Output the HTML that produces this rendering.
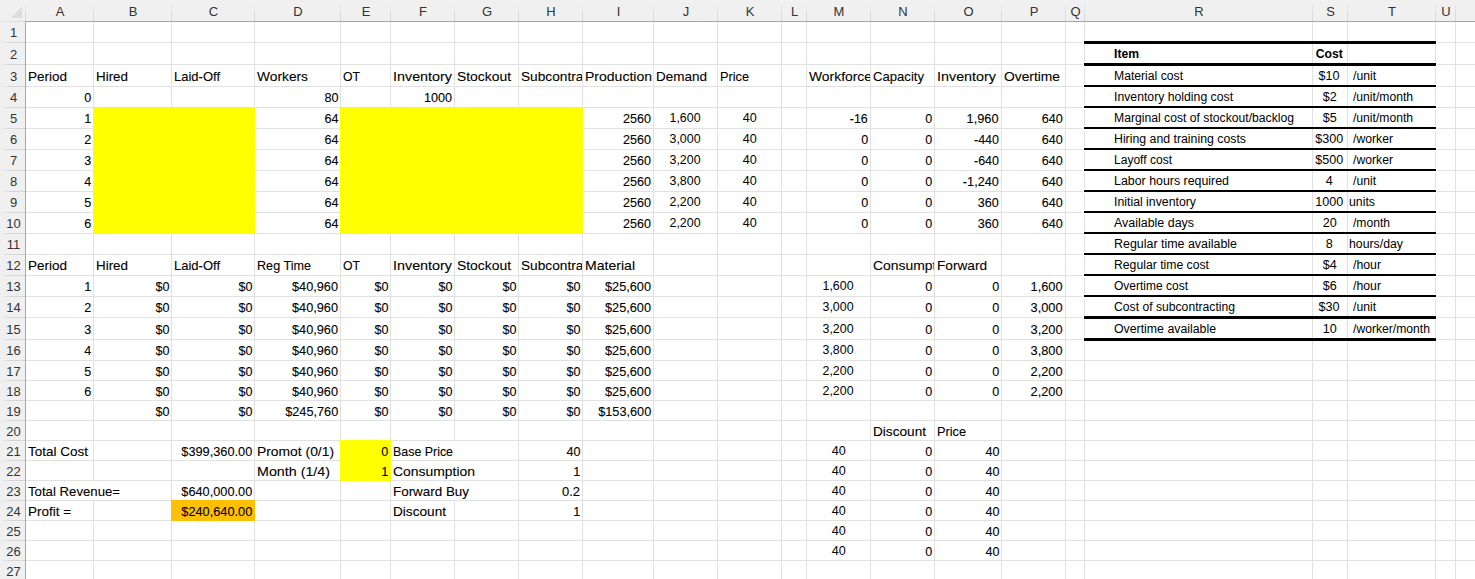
<!DOCTYPE html>
<html><head><meta charset="utf-8"><style>
html,body{margin:0;padding:0;background:#fff;}
body{width:1475px;height:579px;position:relative;overflow:hidden;font-family:"Liberation Sans",sans-serif;}
body div{position:absolute;}
.h{font-size:13px;color:#333333;}
.c{font-size:13.0px;line-height:15px;white-space:nowrap;color:#000;-webkit-text-stroke:0.1px #000;}
.c span,.ar span{display:inline-block;}
.ar{font-size:12px;line-height:14px;white-space:nowrap;color:#000;}
.a{font-size:12px;line-height:14px;white-space:nowrap;color:#000;}
</style></head><body>
<div style="left:93px;top:22px;width:1px;height:557px;background:#e1e1e1;"></div>
<div style="left:171px;top:22px;width:1px;height:557px;background:#e1e1e1;"></div>
<div style="left:254px;top:22px;width:1px;height:557px;background:#e1e1e1;"></div>
<div style="left:340px;top:22px;width:1px;height:557px;background:#e1e1e1;"></div>
<div style="left:390px;top:22px;width:1px;height:557px;background:#e1e1e1;"></div>
<div style="left:454px;top:22px;width:1px;height:557px;background:#e1e1e1;"></div>
<div style="left:518px;top:22px;width:1px;height:557px;background:#e1e1e1;"></div>
<div style="left:582px;top:22px;width:1px;height:557px;background:#e1e1e1;"></div>
<div style="left:653px;top:22px;width:1px;height:557px;background:#e1e1e1;"></div>
<div style="left:717px;top:22px;width:1px;height:557px;background:#e1e1e1;"></div>
<div style="left:781px;top:22px;width:1px;height:557px;background:#e1e1e1;"></div>
<div style="left:806px;top:22px;width:1px;height:557px;background:#e1e1e1;"></div>
<div style="left:870px;top:22px;width:1px;height:557px;background:#e1e1e1;"></div>
<div style="left:934px;top:22px;width:1px;height:557px;background:#e1e1e1;"></div>
<div style="left:1001px;top:22px;width:1px;height:557px;background:#e1e1e1;"></div>
<div style="left:1065px;top:22px;width:1px;height:557px;background:#e1e1e1;"></div>
<div style="left:1084px;top:22px;width:1px;height:557px;background:#e1e1e1;"></div>
<div style="left:1312px;top:22px;width:1px;height:557px;background:#e1e1e1;"></div>
<div style="left:1347px;top:22px;width:1px;height:557px;background:#e1e1e1;"></div>
<div style="left:1435px;top:22px;width:1px;height:557px;background:#e1e1e1;"></div>
<div style="left:1455px;top:22px;width:1px;height:557px;background:#e1e1e1;"></div>
<div style="left:26px;top:42px;width:1449px;height:1px;background:#e1e1e1;"></div>
<div style="left:26px;top:64px;width:1449px;height:1px;background:#e1e1e1;"></div>
<div style="left:26px;top:86px;width:1449px;height:1px;background:#e1e1e1;"></div>
<div style="left:26px;top:107px;width:1449px;height:1px;background:#e1e1e1;"></div>
<div style="left:26px;top:128px;width:1449px;height:1px;background:#e1e1e1;"></div>
<div style="left:26px;top:149px;width:1449px;height:1px;background:#e1e1e1;"></div>
<div style="left:26px;top:170px;width:1449px;height:1px;background:#e1e1e1;"></div>
<div style="left:26px;top:191px;width:1449px;height:1px;background:#e1e1e1;"></div>
<div style="left:26px;top:212px;width:1449px;height:1px;background:#e1e1e1;"></div>
<div style="left:26px;top:233px;width:1449px;height:1px;background:#e1e1e1;"></div>
<div style="left:26px;top:254px;width:1449px;height:1px;background:#e1e1e1;"></div>
<div style="left:26px;top:275px;width:1449px;height:1px;background:#e1e1e1;"></div>
<div style="left:26px;top:296px;width:1449px;height:1px;background:#e1e1e1;"></div>
<div style="left:26px;top:317px;width:1449px;height:1px;background:#e1e1e1;"></div>
<div style="left:26px;top:339px;width:1449px;height:1px;background:#e1e1e1;"></div>
<div style="left:26px;top:360px;width:1449px;height:1px;background:#e1e1e1;"></div>
<div style="left:26px;top:380px;width:1449px;height:1px;background:#e1e1e1;"></div>
<div style="left:26px;top:400px;width:1449px;height:1px;background:#e1e1e1;"></div>
<div style="left:26px;top:420px;width:1449px;height:1px;background:#e1e1e1;"></div>
<div style="left:26px;top:440px;width:1449px;height:1px;background:#e1e1e1;"></div>
<div style="left:26px;top:460px;width:1449px;height:1px;background:#e1e1e1;"></div>
<div style="left:26px;top:480px;width:1449px;height:1px;background:#e1e1e1;"></div>
<div style="left:26px;top:500px;width:1449px;height:1px;background:#e1e1e1;"></div>
<div style="left:26px;top:520px;width:1449px;height:1px;background:#e1e1e1;"></div>
<div style="left:26px;top:540px;width:1449px;height:1px;background:#e1e1e1;"></div>
<div style="left:26px;top:560px;width:1449px;height:1px;background:#e1e1e1;"></div>
<div style="left:0px;top:0px;width:1475px;height:21px;background:#f0f0f0;"></div>
<div style="left:0px;top:22px;width:25px;height:557px;background:#f0f0f0;"></div>
<div style="left:25px;top:21px;width:1450px;height:1px;background:#a6a6a6;"></div>
<div style="left:25px;top:21px;width:1px;height:558px;background:#a6a6a6;"></div>
<div style="left:0px;top:21px;width:25px;height:1px;background:#dadada;background:linear-gradient(90deg,#f0f0f0,#d8d8d8 60%,#d8d8d8)"></div>
<div style="left:25px;top:2px;width:1px;height:19px;background:#dadada;background:linear-gradient(180deg,#f0f0f0,#dcdcdc 60%,#d8d8d8)"></div>
<div style="left:93px;top:2px;width:1px;height:19px;background:#dadada;background:linear-gradient(180deg,#efefef,#dcdcdc 60%,#d8d8d8)"></div>
<div style="left:171px;top:2px;width:1px;height:19px;background:#dadada;background:linear-gradient(180deg,#efefef,#dcdcdc 60%,#d8d8d8)"></div>
<div style="left:254px;top:2px;width:1px;height:19px;background:#dadada;background:linear-gradient(180deg,#efefef,#dcdcdc 60%,#d8d8d8)"></div>
<div style="left:340px;top:2px;width:1px;height:19px;background:#dadada;background:linear-gradient(180deg,#efefef,#dcdcdc 60%,#d8d8d8)"></div>
<div style="left:390px;top:2px;width:1px;height:19px;background:#dadada;background:linear-gradient(180deg,#efefef,#dcdcdc 60%,#d8d8d8)"></div>
<div style="left:454px;top:2px;width:1px;height:19px;background:#dadada;background:linear-gradient(180deg,#efefef,#dcdcdc 60%,#d8d8d8)"></div>
<div style="left:518px;top:2px;width:1px;height:19px;background:#dadada;background:linear-gradient(180deg,#efefef,#dcdcdc 60%,#d8d8d8)"></div>
<div style="left:582px;top:2px;width:1px;height:19px;background:#dadada;background:linear-gradient(180deg,#efefef,#dcdcdc 60%,#d8d8d8)"></div>
<div style="left:653px;top:2px;width:1px;height:19px;background:#dadada;background:linear-gradient(180deg,#efefef,#dcdcdc 60%,#d8d8d8)"></div>
<div style="left:717px;top:2px;width:1px;height:19px;background:#dadada;background:linear-gradient(180deg,#efefef,#dcdcdc 60%,#d8d8d8)"></div>
<div style="left:781px;top:2px;width:1px;height:19px;background:#dadada;background:linear-gradient(180deg,#efefef,#dcdcdc 60%,#d8d8d8)"></div>
<div style="left:806px;top:2px;width:1px;height:19px;background:#dadada;background:linear-gradient(180deg,#efefef,#dcdcdc 60%,#d8d8d8)"></div>
<div style="left:870px;top:2px;width:1px;height:19px;background:#dadada;background:linear-gradient(180deg,#efefef,#dcdcdc 60%,#d8d8d8)"></div>
<div style="left:934px;top:2px;width:1px;height:19px;background:#dadada;background:linear-gradient(180deg,#efefef,#dcdcdc 60%,#d8d8d8)"></div>
<div style="left:1001px;top:2px;width:1px;height:19px;background:#dadada;background:linear-gradient(180deg,#efefef,#dcdcdc 60%,#d8d8d8)"></div>
<div style="left:1065px;top:2px;width:1px;height:19px;background:#dadada;background:linear-gradient(180deg,#efefef,#dcdcdc 60%,#d8d8d8)"></div>
<div style="left:1084px;top:2px;width:1px;height:19px;background:#dadada;background:linear-gradient(180deg,#efefef,#dcdcdc 60%,#d8d8d8)"></div>
<div style="left:1312px;top:2px;width:1px;height:19px;background:#dadada;background:linear-gradient(180deg,#efefef,#dcdcdc 60%,#d8d8d8)"></div>
<div style="left:1347px;top:2px;width:1px;height:19px;background:#dadada;background:linear-gradient(180deg,#efefef,#dcdcdc 60%,#d8d8d8)"></div>
<div style="left:1435px;top:2px;width:1px;height:19px;background:#dadada;background:linear-gradient(180deg,#efefef,#dcdcdc 60%,#d8d8d8)"></div>
<div style="left:1455px;top:2px;width:1px;height:19px;background:#dadada;background:linear-gradient(180deg,#efefef,#dcdcdc 60%,#d8d8d8)"></div>
<div style="left:0px;top:42px;width:25px;height:1px;background:#dadada;background:linear-gradient(90deg,#f0f0f0,#d6d6d6 40%)"></div>
<div style="left:0px;top:64px;width:25px;height:1px;background:#dadada;background:linear-gradient(90deg,#f0f0f0,#d6d6d6 40%)"></div>
<div style="left:0px;top:86px;width:25px;height:1px;background:#dadada;background:linear-gradient(90deg,#f0f0f0,#d6d6d6 40%)"></div>
<div style="left:0px;top:107px;width:25px;height:1px;background:#dadada;background:linear-gradient(90deg,#f0f0f0,#d6d6d6 40%)"></div>
<div style="left:0px;top:128px;width:25px;height:1px;background:#dadada;background:linear-gradient(90deg,#f0f0f0,#d6d6d6 40%)"></div>
<div style="left:0px;top:149px;width:25px;height:1px;background:#dadada;background:linear-gradient(90deg,#f0f0f0,#d6d6d6 40%)"></div>
<div style="left:0px;top:170px;width:25px;height:1px;background:#dadada;background:linear-gradient(90deg,#f0f0f0,#d6d6d6 40%)"></div>
<div style="left:0px;top:191px;width:25px;height:1px;background:#dadada;background:linear-gradient(90deg,#f0f0f0,#d6d6d6 40%)"></div>
<div style="left:0px;top:212px;width:25px;height:1px;background:#dadada;background:linear-gradient(90deg,#f0f0f0,#d6d6d6 40%)"></div>
<div style="left:0px;top:233px;width:25px;height:1px;background:#dadada;background:linear-gradient(90deg,#f0f0f0,#d6d6d6 40%)"></div>
<div style="left:0px;top:254px;width:25px;height:1px;background:#dadada;background:linear-gradient(90deg,#f0f0f0,#d6d6d6 40%)"></div>
<div style="left:0px;top:275px;width:25px;height:1px;background:#dadada;background:linear-gradient(90deg,#f0f0f0,#d6d6d6 40%)"></div>
<div style="left:0px;top:296px;width:25px;height:1px;background:#dadada;background:linear-gradient(90deg,#f0f0f0,#d6d6d6 40%)"></div>
<div style="left:0px;top:317px;width:25px;height:1px;background:#dadada;background:linear-gradient(90deg,#f0f0f0,#d6d6d6 40%)"></div>
<div style="left:0px;top:339px;width:25px;height:1px;background:#dadada;background:linear-gradient(90deg,#f0f0f0,#d6d6d6 40%)"></div>
<div style="left:0px;top:360px;width:25px;height:1px;background:#dadada;background:linear-gradient(90deg,#f0f0f0,#d6d6d6 40%)"></div>
<div style="left:0px;top:380px;width:25px;height:1px;background:#dadada;background:linear-gradient(90deg,#f0f0f0,#d6d6d6 40%)"></div>
<div style="left:0px;top:400px;width:25px;height:1px;background:#dadada;background:linear-gradient(90deg,#f0f0f0,#d6d6d6 40%)"></div>
<div style="left:0px;top:420px;width:25px;height:1px;background:#dadada;background:linear-gradient(90deg,#f0f0f0,#d6d6d6 40%)"></div>
<div style="left:0px;top:440px;width:25px;height:1px;background:#dadada;background:linear-gradient(90deg,#f0f0f0,#d6d6d6 40%)"></div>
<div style="left:0px;top:460px;width:25px;height:1px;background:#dadada;background:linear-gradient(90deg,#f0f0f0,#d6d6d6 40%)"></div>
<div style="left:0px;top:480px;width:25px;height:1px;background:#dadada;background:linear-gradient(90deg,#f0f0f0,#d6d6d6 40%)"></div>
<div style="left:0px;top:500px;width:25px;height:1px;background:#dadada;background:linear-gradient(90deg,#f0f0f0,#d6d6d6 40%)"></div>
<div style="left:0px;top:520px;width:25px;height:1px;background:#dadada;background:linear-gradient(90deg,#f0f0f0,#d6d6d6 40%)"></div>
<div style="left:0px;top:540px;width:25px;height:1px;background:#dadada;background:linear-gradient(90deg,#f0f0f0,#d6d6d6 40%)"></div>
<div style="left:0px;top:560px;width:25px;height:1px;background:#dadada;background:linear-gradient(90deg,#f0f0f0,#d6d6d6 40%)"></div>
<svg style="position:absolute;left:0;top:0" width="25" height="21"><polygon points="22,6.5 22,18 11,18" fill="#dedede"/></svg>
<div style="left:93px;top:107px;width:162px;height:127px;background:#ffff00;"></div>
<div style="left:340px;top:107px;width:243px;height:127px;background:#ffff00;"></div>
<div style="left:340px;top:440px;width:51px;height:41px;background:#ffff00;"></div>
<div style="left:171px;top:500px;width:84px;height:21px;background:#ffc000;"></div>
<div style="left:93px;top:481px;width:1px;height:19px;background:#ffffff;"></div>
<div style="left:454px;top:441px;width:1px;height:19px;background:#ffffff;"></div>
<div style="left:454px;top:461px;width:1px;height:19px;background:#ffffff;"></div>
<div style="left:454px;top:481px;width:1px;height:19px;background:#ffffff;"></div>
<div style="left:1083px;top:40px;width:1px;height:5px;background:#fff;"></div>
<div style="left:1436px;top:40px;width:1px;height:5px;background:#fff;"></div>
<div style="left:1084px;top:40px;width:1px;height:5px;background:#fff;"></div>
<div style="left:1435px;top:40px;width:1px;height:5px;background:#fff;"></div>
<div style="left:1084px;top:41px;width:352px;height:3px;background:#000;"></div>
<div style="left:1083px;top:62px;width:1px;height:5px;background:#fff;"></div>
<div style="left:1436px;top:62px;width:1px;height:5px;background:#fff;"></div>
<div style="left:1084px;top:62px;width:1px;height:5px;background:#fff;"></div>
<div style="left:1435px;top:62px;width:1px;height:5px;background:#fff;"></div>
<div style="left:1084px;top:63px;width:352px;height:3px;background:#000;"></div>
<div style="left:1083px;top:84px;width:1px;height:5px;background:#fff;"></div>
<div style="left:1436px;top:84px;width:1px;height:5px;background:#fff;"></div>
<div style="left:1084px;top:84px;width:1px;height:5px;background:#fff;"></div>
<div style="left:1435px;top:84px;width:1px;height:5px;background:#fff;"></div>
<div style="left:1084px;top:85px;width:352px;height:2px;background:#000;"></div>
<div style="left:1083px;top:105px;width:1px;height:5px;background:#fff;"></div>
<div style="left:1436px;top:105px;width:1px;height:5px;background:#fff;"></div>
<div style="left:1084px;top:105px;width:1px;height:5px;background:#fff;"></div>
<div style="left:1435px;top:105px;width:1px;height:5px;background:#fff;"></div>
<div style="left:1084px;top:106px;width:352px;height:2px;background:#000;"></div>
<div style="left:1083px;top:126px;width:1px;height:5px;background:#fff;"></div>
<div style="left:1436px;top:126px;width:1px;height:5px;background:#fff;"></div>
<div style="left:1084px;top:126px;width:1px;height:5px;background:#fff;"></div>
<div style="left:1435px;top:126px;width:1px;height:5px;background:#fff;"></div>
<div style="left:1084px;top:127px;width:352px;height:2px;background:#000;"></div>
<div style="left:1083px;top:147px;width:1px;height:5px;background:#fff;"></div>
<div style="left:1436px;top:147px;width:1px;height:5px;background:#fff;"></div>
<div style="left:1084px;top:147px;width:1px;height:5px;background:#fff;"></div>
<div style="left:1435px;top:147px;width:1px;height:5px;background:#fff;"></div>
<div style="left:1084px;top:148px;width:352px;height:2px;background:#000;"></div>
<div style="left:1083px;top:168px;width:1px;height:5px;background:#fff;"></div>
<div style="left:1436px;top:168px;width:1px;height:5px;background:#fff;"></div>
<div style="left:1084px;top:168px;width:1px;height:5px;background:#fff;"></div>
<div style="left:1435px;top:168px;width:1px;height:5px;background:#fff;"></div>
<div style="left:1084px;top:169px;width:352px;height:2px;background:#000;"></div>
<div style="left:1083px;top:189px;width:1px;height:5px;background:#fff;"></div>
<div style="left:1436px;top:189px;width:1px;height:5px;background:#fff;"></div>
<div style="left:1084px;top:189px;width:1px;height:5px;background:#fff;"></div>
<div style="left:1435px;top:189px;width:1px;height:5px;background:#fff;"></div>
<div style="left:1084px;top:190px;width:352px;height:2px;background:#000;"></div>
<div style="left:1083px;top:210px;width:1px;height:5px;background:#fff;"></div>
<div style="left:1436px;top:210px;width:1px;height:5px;background:#fff;"></div>
<div style="left:1084px;top:210px;width:1px;height:5px;background:#fff;"></div>
<div style="left:1435px;top:210px;width:1px;height:5px;background:#fff;"></div>
<div style="left:1084px;top:211px;width:352px;height:2px;background:#000;"></div>
<div style="left:1083px;top:231px;width:1px;height:5px;background:#fff;"></div>
<div style="left:1436px;top:231px;width:1px;height:5px;background:#fff;"></div>
<div style="left:1084px;top:231px;width:1px;height:5px;background:#fff;"></div>
<div style="left:1435px;top:231px;width:1px;height:5px;background:#fff;"></div>
<div style="left:1084px;top:232px;width:352px;height:2px;background:#000;"></div>
<div style="left:1083px;top:252px;width:1px;height:5px;background:#fff;"></div>
<div style="left:1436px;top:252px;width:1px;height:5px;background:#fff;"></div>
<div style="left:1084px;top:252px;width:1px;height:5px;background:#fff;"></div>
<div style="left:1435px;top:252px;width:1px;height:5px;background:#fff;"></div>
<div style="left:1084px;top:253px;width:352px;height:2px;background:#000;"></div>
<div style="left:1083px;top:273px;width:1px;height:5px;background:#fff;"></div>
<div style="left:1436px;top:273px;width:1px;height:5px;background:#fff;"></div>
<div style="left:1084px;top:273px;width:1px;height:5px;background:#fff;"></div>
<div style="left:1435px;top:273px;width:1px;height:5px;background:#fff;"></div>
<div style="left:1084px;top:274px;width:352px;height:2px;background:#000;"></div>
<div style="left:1083px;top:294px;width:1px;height:5px;background:#fff;"></div>
<div style="left:1436px;top:294px;width:1px;height:5px;background:#fff;"></div>
<div style="left:1084px;top:294px;width:1px;height:5px;background:#fff;"></div>
<div style="left:1435px;top:294px;width:1px;height:5px;background:#fff;"></div>
<div style="left:1084px;top:295px;width:352px;height:2px;background:#000;"></div>
<div style="left:1083px;top:315px;width:1px;height:5px;background:#fff;"></div>
<div style="left:1436px;top:315px;width:1px;height:5px;background:#fff;"></div>
<div style="left:1084px;top:315px;width:1px;height:5px;background:#fff;"></div>
<div style="left:1435px;top:315px;width:1px;height:5px;background:#fff;"></div>
<div style="left:1084px;top:316px;width:352px;height:3px;background:#000;"></div>
<div style="left:1083px;top:337px;width:1px;height:5px;background:#fff;"></div>
<div style="left:1436px;top:337px;width:1px;height:5px;background:#fff;"></div>
<div style="left:1084px;top:337px;width:1px;height:5px;background:#fff;"></div>
<div style="left:1435px;top:337px;width:1px;height:5px;background:#fff;"></div>
<div style="left:1084px;top:338px;width:352px;height:3px;background:#000;"></div>
<div class="h" style="left:26px;top:1px;width:68px;height:21px;line-height:21px;text-align:center">A</div>
<div class="h" style="left:94px;top:1px;width:78px;height:21px;line-height:21px;text-align:center">B</div>
<div class="h" style="left:172px;top:1px;width:83px;height:21px;line-height:21px;text-align:center">C</div>
<div class="h" style="left:255px;top:1px;width:86px;height:21px;line-height:21px;text-align:center">D</div>
<div class="h" style="left:341px;top:1px;width:50px;height:21px;line-height:21px;text-align:center">E</div>
<div class="h" style="left:391px;top:1px;width:64px;height:21px;line-height:21px;text-align:center">F</div>
<div class="h" style="left:455px;top:1px;width:64px;height:21px;line-height:21px;text-align:center">G</div>
<div class="h" style="left:519px;top:1px;width:64px;height:21px;line-height:21px;text-align:center">H</div>
<div class="h" style="left:583px;top:1px;width:71px;height:21px;line-height:21px;text-align:center">I</div>
<div class="h" style="left:654px;top:1px;width:64px;height:21px;line-height:21px;text-align:center">J</div>
<div class="h" style="left:718px;top:1px;width:64px;height:21px;line-height:21px;text-align:center">K</div>
<div class="h" style="left:782px;top:1px;width:25px;height:21px;line-height:21px;text-align:center">L</div>
<div class="h" style="left:807px;top:1px;width:64px;height:21px;line-height:21px;text-align:center">M</div>
<div class="h" style="left:871px;top:1px;width:64px;height:21px;line-height:21px;text-align:center">N</div>
<div class="h" style="left:935px;top:1px;width:67px;height:21px;line-height:21px;text-align:center">O</div>
<div class="h" style="left:1002px;top:1px;width:64px;height:21px;line-height:21px;text-align:center">P</div>
<div class="h" style="left:1066px;top:1px;width:19px;height:21px;line-height:21px;text-align:center">Q</div>
<div class="h" style="left:1085px;top:1px;width:228px;height:21px;line-height:21px;text-align:center">R</div>
<div class="h" style="left:1313px;top:1px;width:35px;height:21px;line-height:21px;text-align:center">S</div>
<div class="h" style="left:1348px;top:1px;width:88px;height:21px;line-height:21px;text-align:center">T</div>
<div class="h" style="left:1436px;top:1px;width:20px;height:21px;line-height:21px;text-align:center">U</div>
<div class="h" style="left:1456px;top:1px;width:85px;height:21px;line-height:21px;text-align:center">V</div>
<div class="h" style="left:1px;top:23px;width:25px;height:20px;line-height:20px;text-align:center">1</div>
<div class="h" style="left:1px;top:45px;width:25px;height:20px;line-height:20px;text-align:center">2</div>
<div class="h" style="left:1px;top:67px;width:25px;height:20px;line-height:20px;text-align:center">3</div>
<div class="h" style="left:1px;top:88px;width:25px;height:20px;line-height:20px;text-align:center">4</div>
<div class="h" style="left:1px;top:109px;width:25px;height:20px;line-height:20px;text-align:center">5</div>
<div class="h" style="left:1px;top:130px;width:25px;height:20px;line-height:20px;text-align:center">6</div>
<div class="h" style="left:1px;top:151px;width:25px;height:20px;line-height:20px;text-align:center">7</div>
<div class="h" style="left:1px;top:172px;width:25px;height:20px;line-height:20px;text-align:center">8</div>
<div class="h" style="left:1px;top:193px;width:25px;height:20px;line-height:20px;text-align:center">9</div>
<div class="h" style="left:1px;top:214px;width:25px;height:20px;line-height:20px;text-align:center">10</div>
<div class="h" style="left:1px;top:235px;width:25px;height:20px;line-height:20px;text-align:center">11</div>
<div class="h" style="left:1px;top:256px;width:25px;height:20px;line-height:20px;text-align:center">12</div>
<div class="h" style="left:1px;top:277px;width:25px;height:20px;line-height:20px;text-align:center">13</div>
<div class="h" style="left:1px;top:298px;width:25px;height:20px;line-height:20px;text-align:center">14</div>
<div class="h" style="left:1px;top:320px;width:25px;height:20px;line-height:20px;text-align:center">15</div>
<div class="h" style="left:1px;top:341px;width:25px;height:20px;line-height:20px;text-align:center">16</div>
<div class="h" style="left:1px;top:362px;width:25px;height:20px;line-height:20px;text-align:center">17</div>
<div class="h" style="left:1px;top:382px;width:25px;height:20px;line-height:20px;text-align:center">18</div>
<div class="h" style="left:1px;top:402px;width:25px;height:20px;line-height:20px;text-align:center">19</div>
<div class="h" style="left:1px;top:422px;width:25px;height:20px;line-height:20px;text-align:center">20</div>
<div class="h" style="left:1px;top:442px;width:25px;height:20px;line-height:20px;text-align:center">21</div>
<div class="h" style="left:1px;top:462px;width:25px;height:20px;line-height:20px;text-align:center">22</div>
<div class="h" style="left:1px;top:482px;width:25px;height:20px;line-height:20px;text-align:center">23</div>
<div class="h" style="left:1px;top:502px;width:25px;height:20px;line-height:20px;text-align:center">24</div>
<div class="h" style="left:1px;top:522px;width:25px;height:20px;line-height:20px;text-align:center">25</div>
<div class="h" style="left:1px;top:542px;width:25px;height:20px;line-height:20px;text-align:center">26</div>
<div class="h" style="left:1px;top:562px;width:25px;height:20px;line-height:20px;text-align:center">27</div>
<div class="c" style="left:28px;top:68.5px"><span style="transform:scaleX(1.0379);transform-origin:0 0">Period</span></div>
<div class="c" style="left:96px;top:68.5px"><span style="transform:scaleX(1.0301);transform-origin:0 0">Hired</span></div>
<div class="c" style="left:174px;top:68.5px"><span style="transform:scaleX(0.9999);transform-origin:0 0">Laid-Off</span></div>
<div class="c" style="left:257px;top:68.5px"><span style="transform:scaleX(1.0592);transform-origin:0 0">Workers</span></div>
<div class="c" style="left:343px;top:68.5px"><span style="transform:scaleX(0.9417);transform-origin:0 0">OT</span></div>
<div class="c" style="left:393px;top:68.5px"><span style="transform:scaleX(1.1035);transform-origin:0 0">Inventory</span></div>
<div class="c" style="left:457px;top:68.5px"><span style="transform:scaleX(1.0676);transform-origin:0 0">Stockout</span></div>
<div class="c" style="left:585px;top:68.5px"><span style="transform:scaleX(1.0781);transform-origin:0 0">Production</span></div>
<div class="c" style="left:656px;top:68.5px"><span style="transform:scaleX(1.0380);transform-origin:0 0">Demand</span></div>
<div class="c" style="left:720px;top:68.5px"><span style="transform:scaleX(0.9791);transform-origin:0 0">Price</span></div>
<div class="c" style="left:873px;top:68.5px"><span style="transform:scaleX(1.0084);transform-origin:0 0">Capacity</span></div>
<div class="c" style="left:937px;top:68.5px"><span style="transform:scaleX(1.1035);transform-origin:0 0">Inventory</span></div>
<div class="c" style="left:1004px;top:68.5px"><span style="transform:scaleX(1.0621);transform-origin:0 0">Overtime</span></div>
<div style="left:519px;top:65px;width:63px;height:21px;overflow:hidden"><div class="c" style="left:2px;top:3.5px"><span style="transform:scaleX(1.0523);transform-origin:0 0">Subcontract</span></div></div>
<div style="left:807px;top:65px;width:63px;height:21px;overflow:hidden"><div class="c" style="left:2px;top:3.5px"><span style="transform:scaleX(1.0679);transform-origin:0 0">Workforce</span></div></div>
<div class="c" style="right:1384px;top:89.5px"><span style="transform:scaleX(0.9683);transform-origin:100% 0">0</span></div>
<div class="c" style="right:1137px;top:89.5px"><span style="transform:scaleX(0.9683);transform-origin:100% 0">80</span></div>
<div class="c" style="right:1023px;top:89.5px"><span style="transform:scaleX(0.9683);transform-origin:100% 0">1000</span></div>
<div class="c" style="right:1384px;top:110.5px"><span style="transform:scaleX(0.9683);transform-origin:100% 0">1</span></div>
<div class="c" style="right:1137px;top:110.5px"><span style="transform:scaleX(0.9683);transform-origin:100% 0">64</span></div>
<div class="c" style="right:824px;top:110.5px"><span style="transform:scaleX(0.9683);transform-origin:100% 0">2560</span></div>
<div class="ar" style="left:585.5px;width:200px;text-align:center;top:110.5px"><span style="transform:scaleX(1.0328);transform-origin:50% 0">1,600</span></div>
<div class="ar" style="left:649.5px;width:200px;text-align:center;top:110.5px"><span style="transform:scaleX(1.0492);transform-origin:50% 0">40</span></div>
<div class="c" style="right:607px;top:110.5px"><span style="transform:scaleX(0.9581);transform-origin:100% 0">-16</span></div>
<div class="c" style="right:543px;top:110.5px"><span style="transform:scaleX(0.9683);transform-origin:100% 0">0</span></div>
<div class="c" style="right:476px;top:110.5px"><span style="transform:scaleX(0.9838);transform-origin:100% 0">1,960</span></div>
<div class="c" style="right:412px;top:110.5px"><span style="transform:scaleX(0.9683);transform-origin:100% 0">640</span></div>
<div class="c" style="right:1384px;top:131.5px"><span style="transform:scaleX(0.9683);transform-origin:100% 0">2</span></div>
<div class="c" style="right:1137px;top:131.5px"><span style="transform:scaleX(0.9683);transform-origin:100% 0">64</span></div>
<div class="c" style="right:824px;top:131.5px"><span style="transform:scaleX(0.9683);transform-origin:100% 0">2560</span></div>
<div class="ar" style="left:585.5px;width:200px;text-align:center;top:131.5px"><span style="transform:scaleX(1.0328);transform-origin:50% 0">3,000</span></div>
<div class="ar" style="left:649.5px;width:200px;text-align:center;top:131.5px"><span style="transform:scaleX(1.0492);transform-origin:50% 0">40</span></div>
<div class="c" style="right:607px;top:131.5px"><span style="transform:scaleX(0.9683);transform-origin:100% 0">0</span></div>
<div class="c" style="right:543px;top:131.5px"><span style="transform:scaleX(0.9683);transform-origin:100% 0">0</span></div>
<div class="c" style="right:476px;top:131.5px"><span style="transform:scaleX(0.9609);transform-origin:100% 0">-440</span></div>
<div class="c" style="right:412px;top:131.5px"><span style="transform:scaleX(0.9683);transform-origin:100% 0">640</span></div>
<div class="c" style="right:1384px;top:152.5px"><span style="transform:scaleX(0.9683);transform-origin:100% 0">3</span></div>
<div class="c" style="right:1137px;top:152.5px"><span style="transform:scaleX(0.9683);transform-origin:100% 0">64</span></div>
<div class="c" style="right:824px;top:152.5px"><span style="transform:scaleX(0.9683);transform-origin:100% 0">2560</span></div>
<div class="ar" style="left:585.5px;width:200px;text-align:center;top:152.5px"><span style="transform:scaleX(1.0328);transform-origin:50% 0">3,200</span></div>
<div class="ar" style="left:649.5px;width:200px;text-align:center;top:152.5px"><span style="transform:scaleX(1.0492);transform-origin:50% 0">40</span></div>
<div class="c" style="right:607px;top:152.5px"><span style="transform:scaleX(0.9683);transform-origin:100% 0">0</span></div>
<div class="c" style="right:543px;top:152.5px"><span style="transform:scaleX(0.9683);transform-origin:100% 0">0</span></div>
<div class="c" style="right:476px;top:152.5px"><span style="transform:scaleX(0.9609);transform-origin:100% 0">-640</span></div>
<div class="c" style="right:412px;top:152.5px"><span style="transform:scaleX(0.9683);transform-origin:100% 0">640</span></div>
<div class="c" style="right:1384px;top:173.5px"><span style="transform:scaleX(0.9683);transform-origin:100% 0">4</span></div>
<div class="c" style="right:1137px;top:173.5px"><span style="transform:scaleX(0.9683);transform-origin:100% 0">64</span></div>
<div class="c" style="right:824px;top:173.5px"><span style="transform:scaleX(0.9683);transform-origin:100% 0">2560</span></div>
<div class="ar" style="left:585.5px;width:200px;text-align:center;top:173.5px"><span style="transform:scaleX(1.0328);transform-origin:50% 0">3,800</span></div>
<div class="ar" style="left:649.5px;width:200px;text-align:center;top:173.5px"><span style="transform:scaleX(1.0492);transform-origin:50% 0">40</span></div>
<div class="c" style="right:607px;top:173.5px"><span style="transform:scaleX(0.9683);transform-origin:100% 0">0</span></div>
<div class="c" style="right:543px;top:173.5px"><span style="transform:scaleX(0.9683);transform-origin:100% 0">0</span></div>
<div class="c" style="right:476px;top:173.5px"><span style="transform:scaleX(0.9767);transform-origin:100% 0">-1,240</span></div>
<div class="c" style="right:412px;top:173.5px"><span style="transform:scaleX(0.9683);transform-origin:100% 0">640</span></div>
<div class="c" style="right:1384px;top:194.5px"><span style="transform:scaleX(0.9683);transform-origin:100% 0">5</span></div>
<div class="c" style="right:1137px;top:194.5px"><span style="transform:scaleX(0.9683);transform-origin:100% 0">64</span></div>
<div class="c" style="right:824px;top:194.5px"><span style="transform:scaleX(0.9683);transform-origin:100% 0">2560</span></div>
<div class="ar" style="left:585.5px;width:200px;text-align:center;top:194.5px"><span style="transform:scaleX(1.0328);transform-origin:50% 0">2,200</span></div>
<div class="ar" style="left:649.5px;width:200px;text-align:center;top:194.5px"><span style="transform:scaleX(1.0492);transform-origin:50% 0">40</span></div>
<div class="c" style="right:607px;top:194.5px"><span style="transform:scaleX(0.9683);transform-origin:100% 0">0</span></div>
<div class="c" style="right:543px;top:194.5px"><span style="transform:scaleX(0.9683);transform-origin:100% 0">0</span></div>
<div class="c" style="right:476px;top:194.5px"><span style="transform:scaleX(0.9683);transform-origin:100% 0">360</span></div>
<div class="c" style="right:412px;top:194.5px"><span style="transform:scaleX(0.9683);transform-origin:100% 0">640</span></div>
<div class="c" style="right:1384px;top:215.5px"><span style="transform:scaleX(0.9683);transform-origin:100% 0">6</span></div>
<div class="c" style="right:1137px;top:215.5px"><span style="transform:scaleX(0.9683);transform-origin:100% 0">64</span></div>
<div class="c" style="right:824px;top:215.5px"><span style="transform:scaleX(0.9683);transform-origin:100% 0">2560</span></div>
<div class="ar" style="left:585.5px;width:200px;text-align:center;top:215.5px"><span style="transform:scaleX(1.0328);transform-origin:50% 0">2,200</span></div>
<div class="ar" style="left:649.5px;width:200px;text-align:center;top:215.5px"><span style="transform:scaleX(1.0492);transform-origin:50% 0">40</span></div>
<div class="c" style="right:607px;top:215.5px"><span style="transform:scaleX(0.9683);transform-origin:100% 0">0</span></div>
<div class="c" style="right:543px;top:215.5px"><span style="transform:scaleX(0.9683);transform-origin:100% 0">0</span></div>
<div class="c" style="right:476px;top:215.5px"><span style="transform:scaleX(0.9683);transform-origin:100% 0">360</span></div>
<div class="c" style="right:412px;top:215.5px"><span style="transform:scaleX(0.9683);transform-origin:100% 0">640</span></div>
<div class="c" style="left:28px;top:257.5px"><span style="transform:scaleX(1.0379);transform-origin:0 0">Period</span></div>
<div class="c" style="left:96px;top:257.5px"><span style="transform:scaleX(1.0301);transform-origin:0 0">Hired</span></div>
<div class="c" style="left:174px;top:257.5px"><span style="transform:scaleX(0.9999);transform-origin:0 0">Laid-Off</span></div>
<div class="c" style="left:257px;top:257.5px"><span style="transform:scaleX(0.9707);transform-origin:0 0">Reg Time</span></div>
<div class="c" style="left:343px;top:257.5px"><span style="transform:scaleX(0.9417);transform-origin:0 0">OT</span></div>
<div class="c" style="left:393px;top:257.5px"><span style="transform:scaleX(1.1035);transform-origin:0 0">Inventory</span></div>
<div class="c" style="left:457px;top:257.5px"><span style="transform:scaleX(1.0676);transform-origin:0 0">Stockout</span></div>
<div class="c" style="left:585px;top:257.5px"><span style="transform:scaleX(1.0815);transform-origin:0 0">Material</span></div>
<div class="c" style="left:937px;top:257.5px"><span style="transform:scaleX(1.0488);transform-origin:0 0">Forward</span></div>
<div style="left:519px;top:255px;width:63px;height:20px;overflow:hidden"><div class="c" style="left:2px;top:2.5px"><span style="transform:scaleX(1.0523);transform-origin:0 0">Subcontract</span></div></div>
<div style="left:871px;top:255px;width:63px;height:20px;overflow:hidden"><div class="c" style="left:2px;top:2.5px"><span style="transform:scaleX(1.0706);transform-origin:0 0">Consumption</span></div></div>
<div class="c" style="right:1384px;top:278.5px"><span style="transform:scaleX(0.9683);transform-origin:100% 0">1</span></div>
<div class="c" style="right:1306px;top:278.5px"><span style="transform:scaleX(0.9683);transform-origin:100% 0">$0</span></div>
<div class="c" style="right:1223px;top:278.5px"><span style="transform:scaleX(0.9683);transform-origin:100% 0">$0</span></div>
<div class="c" style="right:1087px;top:278.5px"><span style="transform:scaleX(0.9683);transform-origin:100% 0">$0</span></div>
<div class="c" style="right:1023px;top:278.5px"><span style="transform:scaleX(0.9683);transform-origin:100% 0">$0</span></div>
<div class="c" style="right:959px;top:278.5px"><span style="transform:scaleX(0.9683);transform-origin:100% 0">$0</span></div>
<div class="c" style="right:895px;top:278.5px"><span style="transform:scaleX(0.9683);transform-origin:100% 0">$0</span></div>
<div class="c" style="right:1137px;top:278.5px"><span style="transform:scaleX(0.9790);transform-origin:100% 0">$40,960</span></div>
<div class="c" style="right:824px;top:278.5px"><span style="transform:scaleX(0.9790);transform-origin:100% 0">$25,600</span></div>
<div class="ar" style="left:738.5px;width:200px;text-align:center;top:278.5px"><span style="transform:scaleX(1.0328);transform-origin:50% 0">1,600</span></div>
<div class="c" style="right:543px;top:278.5px"><span style="transform:scaleX(0.9683);transform-origin:100% 0">0</span></div>
<div class="c" style="right:476px;top:278.5px"><span style="transform:scaleX(0.9683);transform-origin:100% 0">0</span></div>
<div class="c" style="right:412px;top:278.5px"><span style="transform:scaleX(0.9838);transform-origin:100% 0">1,600</span></div>
<div class="c" style="right:1384px;top:299.5px"><span style="transform:scaleX(0.9683);transform-origin:100% 0">2</span></div>
<div class="c" style="right:1306px;top:299.5px"><span style="transform:scaleX(0.9683);transform-origin:100% 0">$0</span></div>
<div class="c" style="right:1223px;top:299.5px"><span style="transform:scaleX(0.9683);transform-origin:100% 0">$0</span></div>
<div class="c" style="right:1087px;top:299.5px"><span style="transform:scaleX(0.9683);transform-origin:100% 0">$0</span></div>
<div class="c" style="right:1023px;top:299.5px"><span style="transform:scaleX(0.9683);transform-origin:100% 0">$0</span></div>
<div class="c" style="right:959px;top:299.5px"><span style="transform:scaleX(0.9683);transform-origin:100% 0">$0</span></div>
<div class="c" style="right:895px;top:299.5px"><span style="transform:scaleX(0.9683);transform-origin:100% 0">$0</span></div>
<div class="c" style="right:1137px;top:299.5px"><span style="transform:scaleX(0.9790);transform-origin:100% 0">$40,960</span></div>
<div class="c" style="right:824px;top:299.5px"><span style="transform:scaleX(0.9790);transform-origin:100% 0">$25,600</span></div>
<div class="ar" style="left:738.5px;width:200px;text-align:center;top:299.5px"><span style="transform:scaleX(1.0328);transform-origin:50% 0">3,000</span></div>
<div class="c" style="right:543px;top:299.5px"><span style="transform:scaleX(0.9683);transform-origin:100% 0">0</span></div>
<div class="c" style="right:476px;top:299.5px"><span style="transform:scaleX(0.9683);transform-origin:100% 0">0</span></div>
<div class="c" style="right:412px;top:299.5px"><span style="transform:scaleX(0.9838);transform-origin:100% 0">3,000</span></div>
<div class="c" style="right:1384px;top:321.5px"><span style="transform:scaleX(0.9683);transform-origin:100% 0">3</span></div>
<div class="c" style="right:1306px;top:321.5px"><span style="transform:scaleX(0.9683);transform-origin:100% 0">$0</span></div>
<div class="c" style="right:1223px;top:321.5px"><span style="transform:scaleX(0.9683);transform-origin:100% 0">$0</span></div>
<div class="c" style="right:1087px;top:321.5px"><span style="transform:scaleX(0.9683);transform-origin:100% 0">$0</span></div>
<div class="c" style="right:1023px;top:321.5px"><span style="transform:scaleX(0.9683);transform-origin:100% 0">$0</span></div>
<div class="c" style="right:959px;top:321.5px"><span style="transform:scaleX(0.9683);transform-origin:100% 0">$0</span></div>
<div class="c" style="right:895px;top:321.5px"><span style="transform:scaleX(0.9683);transform-origin:100% 0">$0</span></div>
<div class="c" style="right:1137px;top:321.5px"><span style="transform:scaleX(0.9790);transform-origin:100% 0">$40,960</span></div>
<div class="c" style="right:824px;top:321.5px"><span style="transform:scaleX(0.9790);transform-origin:100% 0">$25,600</span></div>
<div class="ar" style="left:738.5px;width:200px;text-align:center;top:321.5px"><span style="transform:scaleX(1.0328);transform-origin:50% 0">3,200</span></div>
<div class="c" style="right:543px;top:321.5px"><span style="transform:scaleX(0.9683);transform-origin:100% 0">0</span></div>
<div class="c" style="right:476px;top:321.5px"><span style="transform:scaleX(0.9683);transform-origin:100% 0">0</span></div>
<div class="c" style="right:412px;top:321.5px"><span style="transform:scaleX(0.9838);transform-origin:100% 0">3,200</span></div>
<div class="c" style="right:1384px;top:342.5px"><span style="transform:scaleX(0.9683);transform-origin:100% 0">4</span></div>
<div class="c" style="right:1306px;top:342.5px"><span style="transform:scaleX(0.9683);transform-origin:100% 0">$0</span></div>
<div class="c" style="right:1223px;top:342.5px"><span style="transform:scaleX(0.9683);transform-origin:100% 0">$0</span></div>
<div class="c" style="right:1087px;top:342.5px"><span style="transform:scaleX(0.9683);transform-origin:100% 0">$0</span></div>
<div class="c" style="right:1023px;top:342.5px"><span style="transform:scaleX(0.9683);transform-origin:100% 0">$0</span></div>
<div class="c" style="right:959px;top:342.5px"><span style="transform:scaleX(0.9683);transform-origin:100% 0">$0</span></div>
<div class="c" style="right:895px;top:342.5px"><span style="transform:scaleX(0.9683);transform-origin:100% 0">$0</span></div>
<div class="c" style="right:1137px;top:342.5px"><span style="transform:scaleX(0.9790);transform-origin:100% 0">$40,960</span></div>
<div class="c" style="right:824px;top:342.5px"><span style="transform:scaleX(0.9790);transform-origin:100% 0">$25,600</span></div>
<div class="ar" style="left:738.5px;width:200px;text-align:center;top:342.5px"><span style="transform:scaleX(1.0328);transform-origin:50% 0">3,800</span></div>
<div class="c" style="right:543px;top:342.5px"><span style="transform:scaleX(0.9683);transform-origin:100% 0">0</span></div>
<div class="c" style="right:476px;top:342.5px"><span style="transform:scaleX(0.9683);transform-origin:100% 0">0</span></div>
<div class="c" style="right:412px;top:342.5px"><span style="transform:scaleX(0.9838);transform-origin:100% 0">3,800</span></div>
<div class="c" style="right:1384px;top:363.5px"><span style="transform:scaleX(0.9683);transform-origin:100% 0">5</span></div>
<div class="c" style="right:1306px;top:363.5px"><span style="transform:scaleX(0.9683);transform-origin:100% 0">$0</span></div>
<div class="c" style="right:1223px;top:363.5px"><span style="transform:scaleX(0.9683);transform-origin:100% 0">$0</span></div>
<div class="c" style="right:1087px;top:363.5px"><span style="transform:scaleX(0.9683);transform-origin:100% 0">$0</span></div>
<div class="c" style="right:1023px;top:363.5px"><span style="transform:scaleX(0.9683);transform-origin:100% 0">$0</span></div>
<div class="c" style="right:959px;top:363.5px"><span style="transform:scaleX(0.9683);transform-origin:100% 0">$0</span></div>
<div class="c" style="right:895px;top:363.5px"><span style="transform:scaleX(0.9683);transform-origin:100% 0">$0</span></div>
<div class="c" style="right:1137px;top:363.5px"><span style="transform:scaleX(0.9790);transform-origin:100% 0">$40,960</span></div>
<div class="c" style="right:824px;top:363.5px"><span style="transform:scaleX(0.9790);transform-origin:100% 0">$25,600</span></div>
<div class="ar" style="left:738.5px;width:200px;text-align:center;top:363.5px"><span style="transform:scaleX(1.0328);transform-origin:50% 0">2,200</span></div>
<div class="c" style="right:543px;top:363.5px"><span style="transform:scaleX(0.9683);transform-origin:100% 0">0</span></div>
<div class="c" style="right:476px;top:363.5px"><span style="transform:scaleX(0.9683);transform-origin:100% 0">0</span></div>
<div class="c" style="right:412px;top:363.5px"><span style="transform:scaleX(0.9838);transform-origin:100% 0">2,200</span></div>
<div class="c" style="right:1384px;top:383.5px"><span style="transform:scaleX(0.9683);transform-origin:100% 0">6</span></div>
<div class="c" style="right:1306px;top:383.5px"><span style="transform:scaleX(0.9683);transform-origin:100% 0">$0</span></div>
<div class="c" style="right:1223px;top:383.5px"><span style="transform:scaleX(0.9683);transform-origin:100% 0">$0</span></div>
<div class="c" style="right:1087px;top:383.5px"><span style="transform:scaleX(0.9683);transform-origin:100% 0">$0</span></div>
<div class="c" style="right:1023px;top:383.5px"><span style="transform:scaleX(0.9683);transform-origin:100% 0">$0</span></div>
<div class="c" style="right:959px;top:383.5px"><span style="transform:scaleX(0.9683);transform-origin:100% 0">$0</span></div>
<div class="c" style="right:895px;top:383.5px"><span style="transform:scaleX(0.9683);transform-origin:100% 0">$0</span></div>
<div class="c" style="right:1137px;top:383.5px"><span style="transform:scaleX(0.9790);transform-origin:100% 0">$40,960</span></div>
<div class="c" style="right:824px;top:383.5px"><span style="transform:scaleX(0.9790);transform-origin:100% 0">$25,600</span></div>
<div class="ar" style="left:738.5px;width:200px;text-align:center;top:383.5px"><span style="transform:scaleX(1.0328);transform-origin:50% 0">2,200</span></div>
<div class="c" style="right:543px;top:383.5px"><span style="transform:scaleX(0.9683);transform-origin:100% 0">0</span></div>
<div class="c" style="right:476px;top:383.5px"><span style="transform:scaleX(0.9683);transform-origin:100% 0">0</span></div>
<div class="c" style="right:412px;top:383.5px"><span style="transform:scaleX(0.9838);transform-origin:100% 0">2,200</span></div>
<div class="c" style="right:1306px;top:403.5px"><span style="transform:scaleX(0.9683);transform-origin:100% 0">$0</span></div>
<div class="c" style="right:1223px;top:403.5px"><span style="transform:scaleX(0.9683);transform-origin:100% 0">$0</span></div>
<div class="c" style="right:1087px;top:403.5px"><span style="transform:scaleX(0.9683);transform-origin:100% 0">$0</span></div>
<div class="c" style="right:1023px;top:403.5px"><span style="transform:scaleX(0.9683);transform-origin:100% 0">$0</span></div>
<div class="c" style="right:959px;top:403.5px"><span style="transform:scaleX(0.9683);transform-origin:100% 0">$0</span></div>
<div class="c" style="right:895px;top:403.5px"><span style="transform:scaleX(0.9683);transform-origin:100% 0">$0</span></div>
<div class="c" style="right:1137px;top:403.5px"><span style="transform:scaleX(0.9776);transform-origin:100% 0">$245,760</span></div>
<div class="c" style="right:824px;top:403.5px"><span style="transform:scaleX(0.9776);transform-origin:100% 0">$153,600</span></div>
<div class="c" style="left:873px;top:423.5px"><span style="transform:scaleX(1.0479);transform-origin:0 0">Discount</span></div>
<div class="c" style="left:937px;top:423.5px"><span style="transform:scaleX(0.9791);transform-origin:0 0">Price</span></div>
<div class="c" style="left:28px;top:443.5px"><span style="transform:scaleX(1.0381);transform-origin:0 0">Total Cost</span></div>
<div class="c" style="right:1223px;top:443.5px"><span style="transform:scaleX(0.9822);transform-origin:100% 0">$399,360.00</span></div>
<div class="c" style="left:257px;top:443.5px"><span style="transform:scaleX(1.0659);transform-origin:0 0">Promot (0/1)</span></div>
<div class="c" style="right:1087px;top:443.5px"><span style="transform:scaleX(0.9683);transform-origin:100% 0">0</span></div>
<div class="c" style="left:393px;top:443.5px"><span style="transform:scaleX(0.9545);transform-origin:0 0">Base Price</span></div>
<div class="c" style="right:895px;top:443.5px"><span style="transform:scaleX(0.9683);transform-origin:100% 0">40</span></div>
<div class="c" style="left:257px;top:463.5px"><span style="transform:scaleX(1.0983);transform-origin:0 0">Month (1/4)</span></div>
<div class="c" style="right:1087px;top:463.5px"><span style="transform:scaleX(0.9683);transform-origin:100% 0">1</span></div>
<div class="c" style="left:393px;top:463.5px"><span style="transform:scaleX(1.0706);transform-origin:0 0">Consumption</span></div>
<div class="c" style="right:895px;top:463.5px"><span style="transform:scaleX(0.9683);transform-origin:100% 0">1</span></div>
<div class="c" style="left:28px;top:483.5px"><span style="transform:scaleX(1.0144);transform-origin:0 0">Total Revenue=</span></div>
<div class="c" style="right:1223px;top:483.5px"><span style="transform:scaleX(0.9822);transform-origin:100% 0">$640,000.00</span></div>
<div class="c" style="left:393px;top:483.5px"><span style="transform:scaleX(1.0314);transform-origin:0 0">Forward Buy</span></div>
<div class="c" style="right:895px;top:483.5px"><span style="transform:scaleX(0.9961);transform-origin:100% 0">0.2</span></div>
<div class="c" style="left:28px;top:503.5px"><span style="transform:scaleX(1.0350);transform-origin:0 0">Profit =</span></div>
<div class="c" style="right:1223px;top:503.5px"><span style="transform:scaleX(0.9822);transform-origin:100% 0">$240,640.00</span></div>
<div class="c" style="left:393px;top:503.5px"><span style="transform:scaleX(1.0479);transform-origin:0 0">Discount</span></div>
<div class="c" style="right:895px;top:503.5px"><span style="transform:scaleX(0.9683);transform-origin:100% 0">1</span></div>
<div class="ar" style="left:738.5px;width:200px;text-align:center;top:443.5px"><span style="transform:scaleX(1.0492);transform-origin:50% 0">40</span></div>
<div class="c" style="right:543px;top:443.5px"><span style="transform:scaleX(0.9683);transform-origin:100% 0">0</span></div>
<div class="c" style="right:476px;top:443.5px"><span style="transform:scaleX(0.9683);transform-origin:100% 0">40</span></div>
<div class="ar" style="left:738.5px;width:200px;text-align:center;top:463.5px"><span style="transform:scaleX(1.0492);transform-origin:50% 0">40</span></div>
<div class="c" style="right:543px;top:463.5px"><span style="transform:scaleX(0.9683);transform-origin:100% 0">0</span></div>
<div class="c" style="right:476px;top:463.5px"><span style="transform:scaleX(0.9683);transform-origin:100% 0">40</span></div>
<div class="ar" style="left:738.5px;width:200px;text-align:center;top:483.5px"><span style="transform:scaleX(1.0492);transform-origin:50% 0">40</span></div>
<div class="c" style="right:543px;top:483.5px"><span style="transform:scaleX(0.9683);transform-origin:100% 0">0</span></div>
<div class="c" style="right:476px;top:483.5px"><span style="transform:scaleX(0.9683);transform-origin:100% 0">40</span></div>
<div class="ar" style="left:738.5px;width:200px;text-align:center;top:503.5px"><span style="transform:scaleX(1.0492);transform-origin:50% 0">40</span></div>
<div class="c" style="right:543px;top:503.5px"><span style="transform:scaleX(0.9683);transform-origin:100% 0">0</span></div>
<div class="c" style="right:476px;top:503.5px"><span style="transform:scaleX(0.9683);transform-origin:100% 0">40</span></div>
<div class="ar" style="left:738.5px;width:200px;text-align:center;top:523.5px"><span style="transform:scaleX(1.0492);transform-origin:50% 0">40</span></div>
<div class="c" style="right:543px;top:523.5px"><span style="transform:scaleX(0.9683);transform-origin:100% 0">0</span></div>
<div class="c" style="right:476px;top:523.5px"><span style="transform:scaleX(0.9683);transform-origin:100% 0">40</span></div>
<div class="ar" style="left:738.5px;width:200px;text-align:center;top:543.5px"><span style="transform:scaleX(1.0492);transform-origin:50% 0">40</span></div>
<div class="c" style="right:543px;top:543.5px"><span style="transform:scaleX(0.9683);transform-origin:100% 0">0</span></div>
<div class="c" style="right:476px;top:543.5px"><span style="transform:scaleX(0.9683);transform-origin:100% 0">40</span></div>
<div class="a" style="left:1114px;top:47px;font-weight:bold;"><span style="display:inline-block;transform:scaleX(1.0133);transform-origin:0 0">Item</span></div>
<div class="a" style="left:1252px;width:155px;text-align:center;top:47px;font-weight:bold;"><span style="display:inline-block;transform:scaleX(1.0123);transform-origin:50% 0">Cost</span></div>
<div class="a" style="left:1349px;top:47px;font-weight:bold;"><span style="display:inline-block;transform:scaleX(0.0000);transform-origin:0 0"></span></div>
<div class="a" style="left:1114px;top:69px;"><span style="display:inline-block;transform:scaleX(1.0145);transform-origin:0 0">Material cost</span></div>
<div class="a" style="left:1252px;width:155px;text-align:center;top:69px;"><span style="display:inline-block;transform:scaleX(1.0492);transform-origin:50% 0">$10</span></div>
<div class="a" style="left:1353px;top:69px;"><span style="display:inline-block;transform:scaleX(1.0145);transform-origin:0 0">/unit</span></div>
<div class="a" style="left:1114px;top:90px;"><span style="display:inline-block;transform:scaleX(1.0197);transform-origin:0 0">Inventory holding cost</span></div>
<div class="a" style="left:1252px;width:155px;text-align:center;top:90px;"><span style="display:inline-block;transform:scaleX(1.0492);transform-origin:50% 0">$2</span></div>
<div class="a" style="left:1353px;top:90px;"><span style="display:inline-block;transform:scaleX(1.0111);transform-origin:0 0">/unit/month</span></div>
<div class="a" style="left:1114px;top:111px;"><span style="display:inline-block;transform:scaleX(1.0148);transform-origin:0 0">Marginal cost of stockout/backlog</span></div>
<div class="a" style="left:1252px;width:155px;text-align:center;top:111px;"><span style="display:inline-block;transform:scaleX(1.0492);transform-origin:50% 0">$5</span></div>
<div class="a" style="left:1353px;top:111px;"><span style="display:inline-block;transform:scaleX(1.0111);transform-origin:0 0">/unit/month</span></div>
<div class="a" style="left:1114px;top:132px;"><span style="display:inline-block;transform:scaleX(1.0255);transform-origin:0 0">Hiring and training costs</span></div>
<div class="a" style="left:1252px;width:155px;text-align:center;top:132px;"><span style="display:inline-block;transform:scaleX(1.0492);transform-origin:50% 0">$300</span></div>
<div class="a" style="left:1353px;top:132px;"><span style="display:inline-block;transform:scaleX(1.0167);transform-origin:0 0">/worker</span></div>
<div class="a" style="left:1114px;top:153px;"><span style="display:inline-block;transform:scaleX(1.0038);transform-origin:0 0">Layoff cost</span></div>
<div class="a" style="left:1252px;width:155px;text-align:center;top:153px;"><span style="display:inline-block;transform:scaleX(1.0492);transform-origin:50% 0">$500</span></div>
<div class="a" style="left:1353px;top:153px;"><span style="display:inline-block;transform:scaleX(1.0167);transform-origin:0 0">/worker</span></div>
<div class="a" style="left:1114px;top:174px;"><span style="display:inline-block;transform:scaleX(1.0324);transform-origin:0 0">Labor hours required</span></div>
<div class="a" style="left:1252px;width:155px;text-align:center;top:174px;"><span style="display:inline-block;transform:scaleX(1.0492);transform-origin:50% 0">4</span></div>
<div class="a" style="left:1353px;top:174px;"><span style="display:inline-block;transform:scaleX(1.0145);transform-origin:0 0">/unit</span></div>
<div class="a" style="left:1114px;top:195px;"><span style="display:inline-block;transform:scaleX(1.0246);transform-origin:0 0">Initial inventory</span></div>
<div class="a" style="left:1252px;width:155px;text-align:center;top:195px;"><span style="display:inline-block;transform:scaleX(1.0492);transform-origin:50% 0">1000</span></div>
<div class="a" style="left:1349px;top:195px;"><span style="display:inline-block;transform:scaleX(1.0259);transform-origin:0 0">units</span></div>
<div class="a" style="left:1114px;top:216px;"><span style="display:inline-block;transform:scaleX(1.0369);transform-origin:0 0">Available days</span></div>
<div class="a" style="left:1252px;width:155px;text-align:center;top:216px;"><span style="display:inline-block;transform:scaleX(1.0492);transform-origin:50% 0">20</span></div>
<div class="a" style="left:1353px;top:216px;"><span style="display:inline-block;transform:scaleX(1.0089);transform-origin:0 0">/month</span></div>
<div class="a" style="left:1114px;top:237px;"><span style="display:inline-block;transform:scaleX(1.0359);transform-origin:0 0">Regular time available</span></div>
<div class="a" style="left:1252px;width:155px;text-align:center;top:237px;"><span style="display:inline-block;transform:scaleX(1.0492);transform-origin:50% 0">8</span></div>
<div class="a" style="left:1349px;top:237px;"><span style="display:inline-block;transform:scaleX(1.0249);transform-origin:0 0">hours/day</span></div>
<div class="a" style="left:1114px;top:258px;"><span style="display:inline-block;transform:scaleX(1.0176);transform-origin:0 0">Regular time cost</span></div>
<div class="a" style="left:1252px;width:155px;text-align:center;top:258px;"><span style="display:inline-block;transform:scaleX(1.0492);transform-origin:50% 0">$4</span></div>
<div class="a" style="left:1353px;top:258px;"><span style="display:inline-block;transform:scaleX(1.0240);transform-origin:0 0">/hour</span></div>
<div class="a" style="left:1114px;top:279px;"><span style="display:inline-block;transform:scaleX(1.0000);transform-origin:0 0">Overtime cost</span></div>
<div class="a" style="left:1252px;width:155px;text-align:center;top:279px;"><span style="display:inline-block;transform:scaleX(1.0492);transform-origin:50% 0">$6</span></div>
<div class="a" style="left:1353px;top:279px;"><span style="display:inline-block;transform:scaleX(1.0240);transform-origin:0 0">/hour</span></div>
<div class="a" style="left:1114px;top:300px;"><span style="display:inline-block;transform:scaleX(1.0137);transform-origin:0 0">Cost of subcontracting</span></div>
<div class="a" style="left:1252px;width:155px;text-align:center;top:300px;"><span style="display:inline-block;transform:scaleX(1.0492);transform-origin:50% 0">$30</span></div>
<div class="a" style="left:1353px;top:300px;"><span style="display:inline-block;transform:scaleX(1.0145);transform-origin:0 0">/unit</span></div>
<div class="a" style="left:1114px;top:322px;"><span style="display:inline-block;transform:scaleX(1.0264);transform-origin:0 0">Overtime available</span></div>
<div class="a" style="left:1252px;width:155px;text-align:center;top:322px;"><span style="display:inline-block;transform:scaleX(1.0492);transform-origin:50% 0">10</span></div>
<div class="a" style="left:1353px;top:322px;"><span style="display:inline-block;transform:scaleX(1.0129);transform-origin:0 0">/worker/month</span></div>
</body></html>
